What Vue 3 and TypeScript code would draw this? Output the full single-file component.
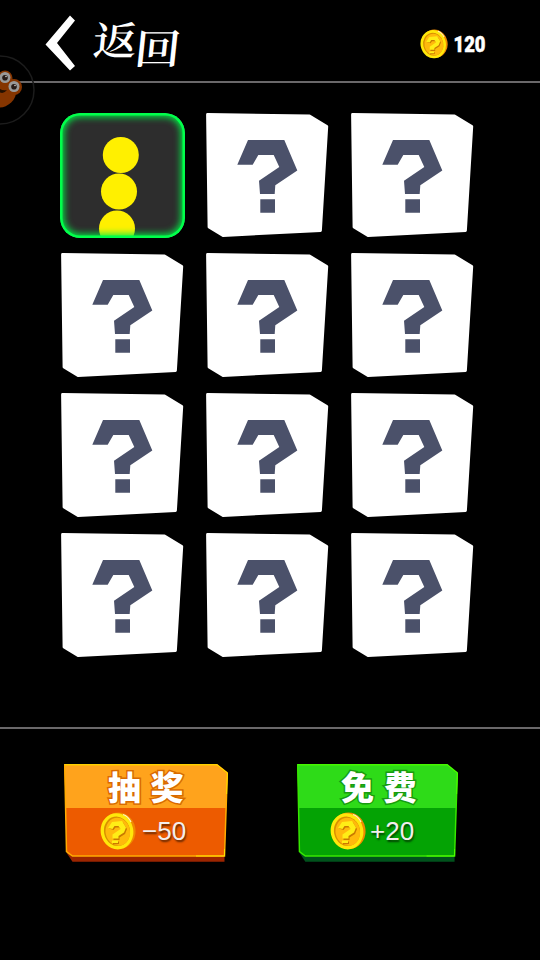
<script setup lang="ts">
import { defineComponent, h } from 'vue'

interface Tile { id: number; unlocked: boolean }
interface Action { id: string; label: string; amount: string; light: string; dark: string; base: string; edge: string; rim: string; outline: string }

const tiles: Tile[] = Array.from({ length: 12 }, (_, i) => ({ id: i, unlocked: i === 0 }))

const actions: Action[] = [
  { id: 'draw', label: '抽奖', amount: '−50', light: '#ffa31c', dark: '#ed5b00', base: '#9c2500', edge: '#ffe000', rim: '#ffab00', outline: '#d96a00' },
  { id: 'free', label: '免费', amount: '+20', light: '#2edb18', dark: '#04a304', base: '#00521c', edge: '#4dff00', rim: '#37e800', outline: '#189c10' },
]

const Coin = defineComponent({
  setup: () => () =>
    h('svg', { viewBox: '0 0 36 38' }, [
      h('ellipse', { cx: 19, cy: 18.6, rx: 16.5, ry: 18.2, fill: '#f08a00', transform: 'rotate(-12 19 18.6)' }),
      h('ellipse', { cx: 17, cy: 19.3, rx: 16.3, ry: 18.2, fill: '#ffe70a', transform: 'rotate(-12 17 19.3)' }),
      h('ellipse', { cx: 17, cy: 19.3, rx: 13, ry: 14.8, fill: '#d99000', transform: 'rotate(-12 17 19.3)' }),
      h('ellipse', { cx: 17.8, cy: 19.8, rx: 12.2, ry: 14, fill: '#ffb90c', transform: 'rotate(-12 17.8 19.8)' }),
      h('path', { d: 'M9 16.500L13 11L23 10.500L27 17L25 22L19.500 25.500V28H13.500V23.500L21.500 18.500L19.500 15.500H15.500L13.500 18ZM13 30L19 29.500V32L13 32.500Z', fill: '#c97a00' }),
      h('path', { d: 'M8 16L12 10L22 9L26 15.500L24 20.500L18.500 24V26.500H12.500V22.500L20.500 17L18.500 14H14.500L12.500 17ZM12 28.500H18V31H12Z', fill: '#ffed16' }),
      h('path', { d: 'M23 2.500Q28 4 31 10', stroke: '#fff7bd', 'stroke-width': 1.3, fill: 'none' }),
    ]),
})
</script>

<template>
  <div class="screen">
    <header class="bar">
      <svg class="chevron" viewBox="0 0 32 56"><path d="M25 0.500L30 5.500L12 28L30 51L25 55.500L0.500 29.500Z" /></svg>
      <h1 class="title"><span class="first">返</span><span class="second">回</span></h1>
      <div class="wallet">
        <Coin class="coin-small" />
        <svg class="balance" viewBox="0 0 38 30"><text x="0.500" y="22.500" textLength="32" lengthAdjust="spacingAndGlyphs">120</text></svg>
      </div>
      <svg class="mascot" viewBox="0 0 36 72">
        <circle cx="0" cy="35" r="34" fill="none" stroke="#1c1c1c" stroke-width="1.500" />
        <circle cx="-1" cy="35" r="17.500" fill="#853500" />
        <circle cx="5" cy="23" r="7.500" fill="#853500" />
        <circle cx="14" cy="32" r="8" fill="#853500" />
        <g fill="#999"><circle cx="5" cy="22.500" r="5.500" /><circle cx="14" cy="31.500" r="5.500" /></g>
        <g fill="#261b17"><circle cx="5" cy="22.700" r="2.800" /><circle cx="14" cy="31.700" r="2.800" /></g>
        <g fill="#ccc"><circle cx="6" cy="21.500" r="0.800" /><circle cx="15" cy="30.500" r="0.800" /></g>
        <path d="M0 34Q3 36 7 35Q4 39 0 37.500Z" fill="#231000" />
      </svg>
    </header>

    <main class="board">
      <div v-for="tile in tiles" :key="tile.id" class="tile">
        <div v-if="tile.unlocked" class="skin">
          <svg viewBox="0 0 125 125">
            <g fill="#fff000"><circle cx="60.800" cy="42" r="18" /><circle cx="59" cy="78.500" r="18" /><circle cx="57" cy="115.500" r="18" /></g>
          </svg>
        </div>
        <svg v-else viewBox="0 0 125 125">
          <path d="M2.500 1.500L104.500 3L121.800 13.500L115.500 117.500L18 122.500L4 114Z" fill="#fff" stroke="#fff" stroke-width="2.800" stroke-linejoin="round" />
          <path d="M43 27H79.300L92.300 57.500L70.300 72.300L69.700 81H55L54 67.700L74.300 54L68.700 42H53.300L47.700 51.700H32.300ZM55.300 86.300H70V99.700H55.300Z" fill="#4b516a" />
        </svg>
      </div>
    </main>

    <footer class="actions">
      <button v-for="a in actions" :key="a.id" class="action" :class="a.id">
        <svg class="plate" viewBox="0 0 164 98" preserveAspectRatio="none">
          <path d="M2.700 89L8.500 97.700H160.500V90Z" :fill="a.base" />
          <path d="M0.500 0.800H153L163.500 9L160.500 92H8.500L2.500 87.500Z" :fill="a.dark" />
          <path d="M0.500 0.800H153L163.500 9L162.200 44H1.500Z" :fill="a.light" />
          <path d="M0.700 0.800H153L163.300 9L160.500 92H8.500L2.500 87.500Z" fill="none" :stroke="a.rim" stroke-width="1.500" />
          <path d="M0.700 0.800H153L163.300 9L162.600 30M160.500 85V92H132" fill="none" :stroke="a.edge" stroke-width="1" />
        </svg>
        <span class="label" :style="{ '--outline': a.outline }">{{ a.label }}</span>
        <span class="cost"><Coin class="coin" /><span class="amount">{{ a.amount }}</span></span>
      </button>
    </footer>
  </div>
</template>

<style>
body { margin: 0; background: #000; }
</style>

<style scoped>
.screen { width: 540px; height: 960px; display: flex; flex-direction: column; background: #000; color: #fff; overflow: hidden; }
.bar { position: relative; box-sizing: border-box; height: 83px; flex: none; display: flex; align-items: flex-start; padding: 15px 49px 0 45px; border-bottom: 2px solid #6a686a; }
.chevron { width: 32px; height: 56px; fill: #fff; }
.title { display: flex; margin: 0 0 0 16px; font: 600 44px/44px "Noto Serif CJK SC", "Noto Sans CJK SC", serif; }
.title span { display: block; width: 43px; transform-origin: center; }
.title .first { transform: skewX(-6deg) scaleY(.9); }
.title .second { margin-top: 9px; transform: skewX(-6deg) scale(1.04, .94); }
.wallet { display: flex; align-items: center; gap: 5px; margin: 14px 0 0 auto; }
.coin-small { width: 28px; height: 30px; }
.balance { width: 38px; height: 30px; overflow: visible; }
.balance text { font: 900 22px Roboto, sans-serif; fill: #fff; stroke: #fff; stroke-width: .5px; }
.mascot { position: absolute; left: 0; top: 55px; width: 36px; height: 72px; }
.board { box-sizing: border-box; height: 644px; flex: none; display: grid; grid-template-columns: repeat(3, 125px); grid-auto-rows: 125px; gap: 15px 20px; align-content: start; padding: 30px 0 0 60px; }
.tile svg { display: block; width: 125px; height: 125px; }
.skin { position: relative; width: 125px; height: 125px; border-radius: 20px; overflow: hidden; background: #2d2d2d; }
.skin::after { content: ""; position: absolute; inset: 0; border-radius: 20px; box-shadow: inset 0 0 0 2.5px #00ff4b, inset 0 0 7px 4px #00f046; }
.actions { flex: 1; display: flex; align-items: flex-start; gap: 69px; padding: 35px 0 0 64px; border-top: 2px solid #6a686a; }
.action { position: relative; width: 164px; height: 98px; padding: 0; border: 0; background: none; color: #fff; display: flex; flex-direction: column; text-align: left; }
.action.free { width: 161px; }
.plate { position: absolute; inset: 0; width: 100%; height: 98px; }
.label { position: relative; margin-left: 44px; height: 46px; font: 900 33px/45px "Noto Sans CJK SC", sans-serif; letter-spacing: 9.5px; white-space: nowrap; -webkit-text-stroke: 3px var(--outline); paint-order: stroke fill; }
.cost { position: relative; display: flex; align-items: center; height: 42px; margin-left: 36px; }
.free .cost { margin-left: 33px; }
.coin { width: 36px; height: 38px; }
.amount { margin-left: 6px; font: 26px/42px "Liberation Sans", Arial, sans-serif; color: #f3eeee; text-shadow: 1px 2px 2px rgba(0, 0, 0, .6); }
.free .amount { margin-left: 4px; }
</style>
